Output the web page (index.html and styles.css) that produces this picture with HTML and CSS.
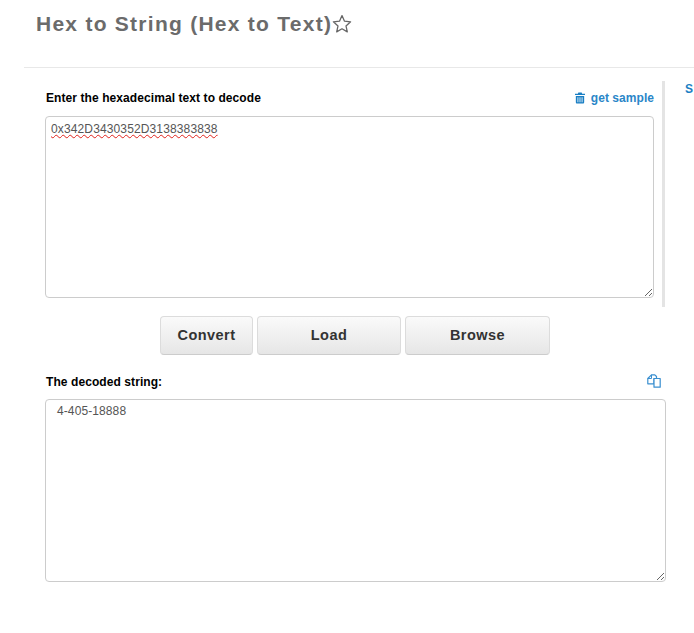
FILE: index.html
```html
<!DOCTYPE html>
<html lang="en">
<head>
<meta charset="utf-8">
<title>Hex to String</title>
<link rel="stylesheet" href="styles.css">
</head>
<body>
<header class="page-head">
  <h1 class="title">Hex to String (Hex to Text)<svg class="star" viewBox="0 0 20 20" width="20" height="20"><path d="M10 1.6l2.5 5.6 6.1.6-4.6 4.1 1.3 6-5.3-3.1-5.3 3.1 1.3-6L1.4 7.8l6.1-.6z" fill="none" stroke="#666" stroke-width="1.3" stroke-linejoin="round"/></svg></h1>
</header>
<div class="rule-wrap"><div class="rule"></div></div>
<div class="layout">
  <main class="main">
    <section class="input-block">
      <div class="label-row">
        <label class="label" for="hex">Enter the hexadecimal text to decode</label>
        <a class="sample" href="#"><svg class="trash" viewBox="0 0 12 13" width="10" height="12"><path fill="#1a7fc4" d="M4 0h4l.6 1.500H12V3H0V1.500h3.400zM1 4h10v7.500c0 .8-.6 1.500-1.400 1.500H2.400C1.600 13 1 12.300 1 11.500zm2 1.500v6h1v-6zm2.500 0v6h1v-6zm2.500 0v6h1v-6z"/></svg>get sample</a>
      </div>
      <textarea class="box box-in" id="hex" spellcheck="false">0x342D3430352D3138383838</textarea>
    </section>
    <div class="buttons">
      <button class="btn btn-convert">Convert</button>
      <button class="btn btn-load">Load</button>
      <button class="btn btn-browse">Browse</button>
    </div>
    <section class="output-block">
      <div class="label-row label-row-out">
        <label class="label" for="out">The decoded string:</label>
        <svg class="copy" viewBox="0 0 14 14" width="14" height="14"><path d="M4.500.8h3.300L9.500 2.500V4.500H7V9.800H.8V4.500z" fill="none" stroke="#3a8fd0" stroke-width="1.200" stroke-linejoin="round"/><path d="M4.500.8V4.500H.8" fill="none" stroke="#3a8fd0" stroke-width="1"/><path d="M7 4.500h6.200v8.700H7z" fill="#fff" stroke="#3a8fd0" stroke-width="1.200" stroke-linejoin="round"/></svg>
      </div>
      <textarea class="box box-out" id="out" spellcheck="false">4-405-18888</textarea>
    </section>
  </main>
  <aside class="side"><span class="side-head">S</span></aside>
</div>
</body>
</html>
```
FILE: styles.css
```css
html, body {
  margin: 0;
  padding: 0;
  background: #fff;
  overflow: hidden;
}
body {
  width: 694px;
  height: 633px;
  font-family: "Liberation Sans", Arial, sans-serif;
  color: #333;
}
.page-head {
  height: 67px;
  padding-left: 36px;
  box-sizing: border-box;
}
.title {
  margin: 0;
  padding-top: 11px;
  font-size: 21px;
  line-height: 26px;
  font-weight: 700;
  letter-spacing: 1.26px;
  color: #6b6b6b;
  display: flex;
  align-items: center;
}
.star {
  flex: none;
}
.rule-wrap {
  padding-left: 24px;
}
.rule {
  height: 1px;
  background: #e8e8e8;
}
.layout {
  display: flex;
  padding-left: 45px;
  padding-top: 13px;
}
.main {
  width: 621px;
  flex: none;
}
.input-block {
  width: 620px;
  height: 226px;
  border-right: 3px solid #e4e4e4;
  box-sizing: border-box;
  padding-right: 8px;
}
.label-row {
  display: flex;
  justify-content: space-between;
  align-items: center;
  height: 35px;
  padding-bottom: 4px;
  box-sizing: border-box;
}
.label {
  font-size: 12px;
  font-weight: 700;
  letter-spacing: 0.08px;
  color: #000;
  padding-left: 1px;
  padding-top: 2px;
}
.sample {
  font-size: 12px;
  font-weight: 700;
  letter-spacing: 0.05px;
  color: #2a86c8;
  text-decoration: none;
  display: flex;
  align-items: center;
  padding-top: 2px;
}
.trash {
  margin-right: 6px;
}
.box {
  display: block;
  box-sizing: border-box;
  border: 1px solid #ccc;
  border-radius: 4px;
  background: #fff;
  font-family: "Liberation Sans", Arial, sans-serif;
  font-size: 12px;
  line-height: 18px;
  color: #555;
  outline: none;
  margin: 0;
}
.box-in {
  width: 609px;
  height: 182px;
  padding: 3px 5px;
  letter-spacing: 0.13px;
  text-decoration: underline wavy #e0221b 1px;
  text-underline-offset: 1px;
}
.buttons {
  display: flex;
  padding-left: 115px;
  gap: 4px;
  margin-top: 9px;
}
.btn {
  height: 39px;
  border: 1px solid #dcdcdc;
  border-bottom-color: #ccc;
  border-radius: 4px;
  background: linear-gradient(#fafafa, #e6e6e6);
  font-family: "Liberation Sans", Arial, sans-serif;
  font-size: 14.5px;
  font-weight: 700;
  letter-spacing: 0.45px;
  color: #333;
  padding: 0 0 1px;
}
.btn-convert { width: 93px; }
.btn-load { width: 144px; }
.btn-browse { width: 145px; }
.output-block {
  margin-top: 11px;
}
.label-row-out {
  height: 33px;
  padding-right: 5px;
}
.copy {
  flex: none;
}
.box-out {
  width: 621px;
  height: 183px;
  padding: 2px 11px;
  letter-spacing: 0.1px;
}
.side {
  padding-left: 19px;
  margin-top: -2px;
}
.side-head {
  font-size: 12px;
  font-weight: 700;
  color: #1a7fc4;
}
```
